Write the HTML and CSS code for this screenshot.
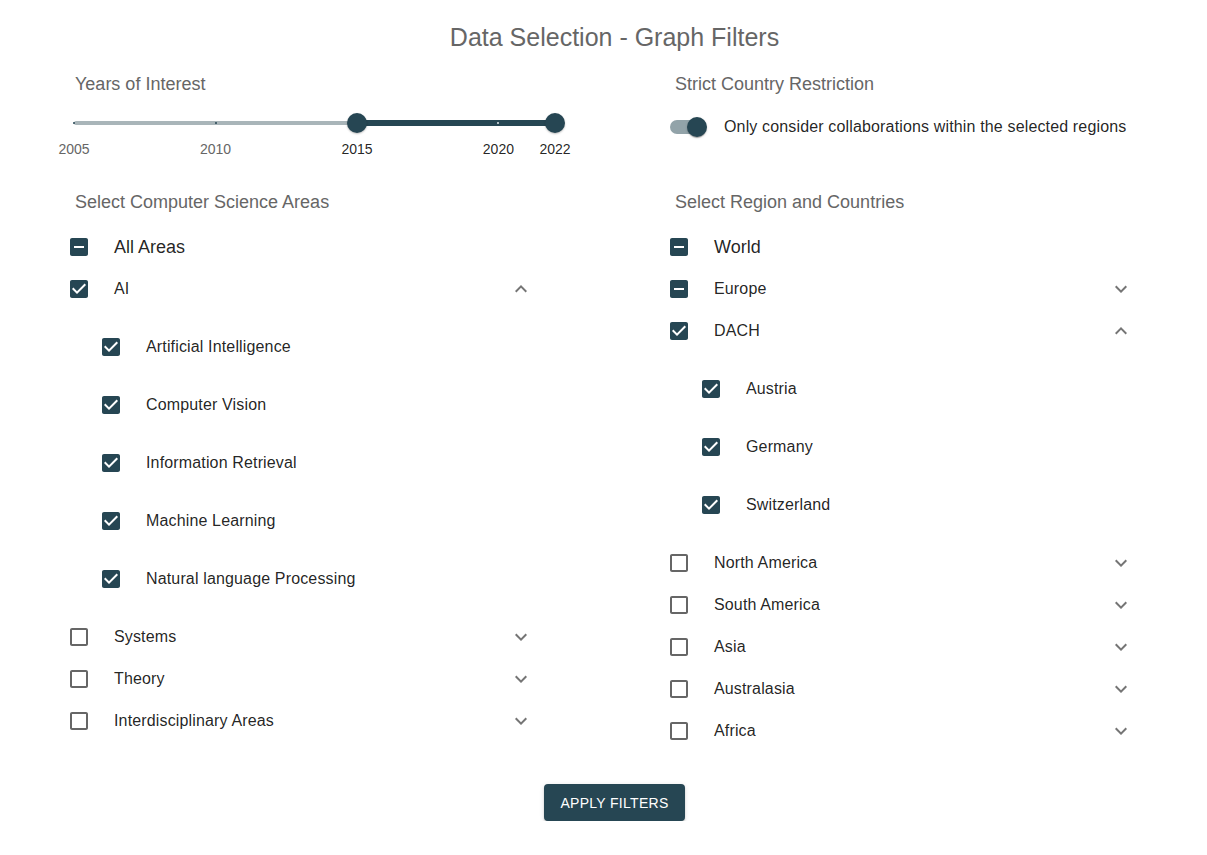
FILE: index.html
```html
<!DOCTYPE html>
<html>
<head>
<meta charset="utf-8">
<link rel="stylesheet" href="styles.css">
</head>
<body>
<svg class="defs" width="0" height="0">
  <defs>
    <symbol id="cb-checked" viewBox="0 0 24 24"><path d="M19 3H5c-1.11 0-2 .9-2 2v14c0 1.1.89 2 2 2h14c1.11 0 2-.9 2-2V5c0-1.1-.89-2-2-2zm-9 14l-5-5 1.41-1.41L10 14.17l7.59-7.59L19 8l-9 9z"/></symbol>
    <symbol id="cb-indet" viewBox="0 0 24 24"><path d="M19 3H5c-1.1 0-2 .9-2 2v14c0 1.1.9 2 2 2h14c1.1 0 2-.9 2-2V5c0-1.1-.9-2-2-2zm-2 10H7v-2h10v2z"/></symbol>
    <symbol id="cb-empty" viewBox="0 0 24 24"><path d="M19 5v14H5V5h14m0-2H5c-1.1 0-2 .9-2 2v14c0 1.1.9 2 2 2h14c1.1 0 2-.9 2-2V5c0-1.1-.9-2-2-2z"/></symbol>
    <symbol id="exp-more" viewBox="0 0 24 24"><path d="M16.59 8.59 12 13.17 7.41 8.59 6 10l6 6 6-6z"/></symbol>
    <symbol id="exp-less" viewBox="0 0 24 24"><path d="m12 8-6 6 1.41 1.41L12 10.83l4.590 4.58L18 14z"/></symbol>
  </defs>
</svg>
<div class="page">
  <h1 class="title">Data Selection - Graph Filters</h1>

  <div class="columns top">
    <div class="col">
      <h2 class="heading">Years of Interest</h2>
      <div class="slider">
        <div class="track"></div>
        <div class="track-active"></div>
        <span class="mark mark-dark" style="left:0px"></span>
        <span class="mark mark-dark" style="left:141.5px"></span>
        <span class="mark mark-light" style="left:424.4px"></span>
        <span class="thumb" style="left:283px"></span>
        <span class="thumb" style="left:481px"></span>
      </div>
      <div class="slider-labels">
        <span class="slabel" style="left:0px">2005</span>
        <span class="slabel" style="left:141.5px">2010</span>
        <span class="slabel active" style="left:283px">2015</span>
        <span class="slabel active" style="left:424.4px">2020</span>
        <span class="slabel active" style="left:481px">2022</span>
      </div>
    </div>
    <div class="col">
      <h2 class="heading">Strict Country Restriction</h2>
      <div class="switch-row">
        <span class="switch"><span class="switch-track"></span><span class="switch-thumb"></span></span>
        <span class="switch-label">Only consider collaborations within the selected regions</span>
      </div>
    </div>
  </div>

  <div class="columns lists">
    <div class="col">
      <h2 class="heading">Select Computer Science Areas</h2>
      <div class="list">
        <div class="row"><svg class="cb on"><use href="#cb-indet"/></svg><span class="label big">All Areas</span></div>
        <div class="row"><svg class="cb on"><use href="#cb-checked"/></svg><span class="label">AI</span><svg class="chev"><use href="#exp-less"/></svg></div>
        <div class="nested">
          <div class="row sub"><svg class="cb on"><use href="#cb-checked"/></svg><span class="label">Artificial Intelligence</span></div>
          <div class="row sub"><svg class="cb on"><use href="#cb-checked"/></svg><span class="label">Computer Vision</span></div>
          <div class="row sub"><svg class="cb on"><use href="#cb-checked"/></svg><span class="label">Information Retrieval</span></div>
          <div class="row sub"><svg class="cb on"><use href="#cb-checked"/></svg><span class="label">Machine Learning</span></div>
          <div class="row sub"><svg class="cb on"><use href="#cb-checked"/></svg><span class="label">Natural language Processing</span></div>
        </div>
        <div class="row"><svg class="cb off"><use href="#cb-empty"/></svg><span class="label">Systems</span><svg class="chev"><use href="#exp-more"/></svg></div>
        <div class="row"><svg class="cb off"><use href="#cb-empty"/></svg><span class="label">Theory</span><svg class="chev"><use href="#exp-more"/></svg></div>
        <div class="row"><svg class="cb off"><use href="#cb-empty"/></svg><span class="label">Interdisciplinary Areas</span><svg class="chev"><use href="#exp-more"/></svg></div>
      </div>
    </div>
    <div class="col">
      <h2 class="heading">Select Region and Countries</h2>
      <div class="list">
        <div class="row"><svg class="cb on"><use href="#cb-indet"/></svg><span class="label big">World</span></div>
        <div class="row"><svg class="cb on"><use href="#cb-indet"/></svg><span class="label">Europe</span><svg class="chev"><use href="#exp-more"/></svg></div>
        <div class="row"><svg class="cb on"><use href="#cb-checked"/></svg><span class="label">DACH</span><svg class="chev"><use href="#exp-less"/></svg></div>
        <div class="nested">
          <div class="row sub"><svg class="cb on"><use href="#cb-checked"/></svg><span class="label">Austria</span></div>
          <div class="row sub"><svg class="cb on"><use href="#cb-checked"/></svg><span class="label">Germany</span></div>
          <div class="row sub"><svg class="cb on"><use href="#cb-checked"/></svg><span class="label">Switzerland</span></div>
        </div>
        <div class="row"><svg class="cb off"><use href="#cb-empty"/></svg><span class="label">North America</span><svg class="chev"><use href="#exp-more"/></svg></div>
        <div class="row"><svg class="cb off"><use href="#cb-empty"/></svg><span class="label">South America</span><svg class="chev"><use href="#exp-more"/></svg></div>
        <div class="row"><svg class="cb off"><use href="#cb-empty"/></svg><span class="label">Asia</span><svg class="chev"><use href="#exp-more"/></svg></div>
        <div class="row"><svg class="cb off"><use href="#cb-empty"/></svg><span class="label">Australasia</span><svg class="chev"><use href="#exp-more"/></svg></div>
        <div class="row"><svg class="cb off"><use href="#cb-empty"/></svg><span class="label">Africa</span><svg class="chev"><use href="#exp-more"/></svg></div>
      </div>
    </div>
  </div>

  <div class="actions">
    <button class="apply">APPLY FILTERS</button>
  </div>
</div>
</body>
</html>
```

FILE: styles.css
```css
html, body {
  margin: 0;
  padding: 0;
  background: #ffffff;
  overflow: hidden;
}
body {
  font-family: "Liberation Sans", Arial, sans-serif;
  color: rgba(0, 0, 0, 0.87);
}
.defs {
  position: absolute;
  width: 0;
  height: 0;
  overflow: hidden;
}
.page {
  width: 1201px;
  margin-left: 14px;
}
.title {
  margin: 0;
  padding-top: 21px;
  font-size: 25px;
  line-height: 32px;
  font-weight: 400;
  text-align: center;
  color: #666666;
}
.columns {
  display: grid;
  grid-template-columns: 600px 600px;
}
.columns.top {
  margin-top: 19px;
  height: 87px;
}
.columns.lists {
  margin-top: 31px;
}
.col {
  padding-left: 56px;
}
.heading {
  margin: 0;
  padding-left: 5px;
  font-size: 18px;
  line-height: 24px;
  font-weight: 400;
  color: #666666;
}

/* slider */
.slider {
  position: relative;
  margin-top: 17px;
  margin-left: 4px;
  width: 481px;
  height: 20px;
}
.track {
  position: absolute;
  left: 0;
  right: 0;
  top: 8px;
  height: 4px;
  border-radius: 2px;
  background: #a9b5b9;
}
.track-active {
  position: absolute;
  left: 283px;
  width: 198px;
  top: 7px;
  height: 6px;
  background: #264653;
}
.mark {
  position: absolute;
  top: 9px;
  width: 2px;
  height: 2px;
  margin-left: -1px;
  border-radius: 1px;
}
.mark-dark { background: #264653; }
.mark-light { background: #dfe6e8; }
.thumb {
  position: absolute;
  top: 0;
  width: 20px;
  height: 20px;
  margin-left: -10px;
  border-radius: 50%;
  background: #264653;
  box-shadow: 0 1px 2px rgba(0, 0, 0, 0.25);
}
.slider-labels {
  position: relative;
  margin-top: 6px;
  margin-left: 4px;
  width: 481px;
  height: 20px;
}
.slabel {
  position: absolute;
  top: 0;
  transform: translateX(-50%);
  font-size: 14px;
  line-height: 20px;
  color: #666666;
}
.slabel.active {
  color: rgba(0, 0, 0, 0.87);
}

/* switch */
.switch-row {
  display: flex;
  align-items: center;
  margin-top: 12px;
  height: 38px;
}
.switch {
  position: relative;
  width: 38px;
  height: 20px;
  flex: none;
}
.switch-track {
  position: absolute;
  left: 0;
  top: 3px;
  width: 34px;
  height: 14px;
  border-radius: 7px;
  background: #92a3a9;
}
.switch-thumb {
  position: absolute;
  left: 17px;
  top: 0;
  width: 20px;
  height: 20px;
  border-radius: 50%;
  background: #264653;
  box-shadow: 0 2px 1px -1px rgba(0,0,0,0.2), 0 1px 1px rgba(0,0,0,0.14), 0 1px 3px rgba(0,0,0,0.12);
}
.switch-label {
  margin-left: 16px;
  font-size: 16px;
  letter-spacing: 0.15px;
  color: rgba(0, 0, 0, 0.87);
}

/* lists */
.list {
  margin-top: 12px;
  margin-left: -3px;
}
.row {
  display: flex;
  align-items: center;
  height: 42px;
  width: 466px;
}
.row.sub {
  height: 58px;
  margin-left: 32px;
  width: 434px;
}
.nested {
  padding: 8px 0;
}
.cb {
  width: 24px;
  height: 24px;
  flex: none;
}
.cb.on { fill: #264653; }
.cb.off { fill: #666666; }
.label {
  margin-left: 23px;
  font-size: 16px;
  letter-spacing: 0.15px;
  color: rgba(0, 0, 0, 0.87);
}
.label.big {
  font-size: 18px;
  letter-spacing: 0;
}
.chev {
  width: 24px;
  height: 24px;
  margin-left: auto;
  fill: #757575;
  flex: none;
}

/* button */
.actions {
  display: flex;
  justify-content: center;
  margin-top: 32px;
}
.apply {
  width: 141px;
  height: 37px;
  border: none;
  border-radius: 4px;
  background: #264653;
  color: #ffffff;
  font-family: "Liberation Sans", Arial, sans-serif;
  font-size: 14px;
  letter-spacing: 0.3px;
  box-shadow: 0 3px 1px -2px rgba(0,0,0,0.2), 0 2px 2px rgba(0,0,0,0.14), 0 1px 5px rgba(0,0,0,0.12);
}
```
